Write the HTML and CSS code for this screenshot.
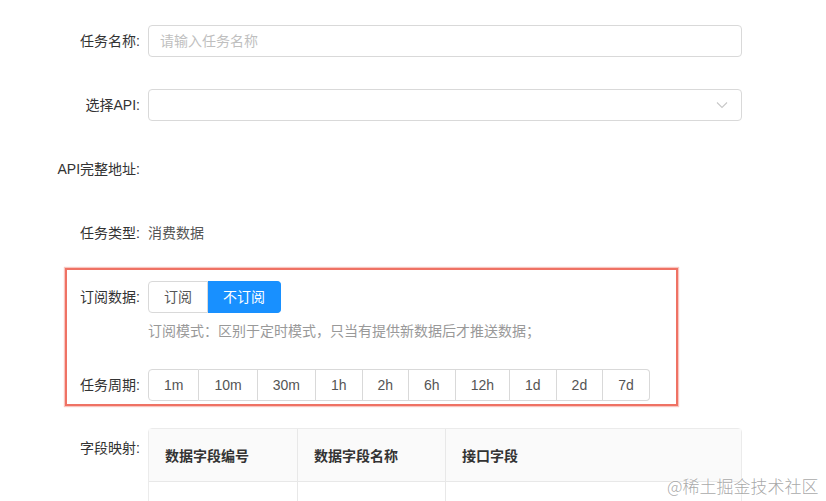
FILE: index.html
```html
<!DOCTYPE html>
<html lang="zh-CN">
<head>
<meta charset="utf-8">
<title>任务配置</title>
<link rel="stylesheet" href="styles.css">
</head>
<body>
<form class="form">
  <div class="item">
    <label class="label">任务名称:</label>
    <div class="control">
      <input class="input" type="text" placeholder="请输入任务名称">
    </div>
  </div>
  <div class="item">
    <label class="label">选择API:</label>
    <div class="control">
      <div class="select">
        <svg class="arrow" width="12" height="8" viewBox="0 0 12 8"><path d="M1 1.5 L6 6.5 L11 1.5" fill="none" stroke="#c8c8c8" stroke-width="1.1"/></svg>
      </div>
    </div>
  </div>
  <div class="item">
    <label class="label">API完整地址:</label>
    <div class="control text"></div>
  </div>
  <div class="item">
    <label class="label">任务类型:</label>
    <div class="control text">消费数据</div>
  </div>

  <div class="box">
    <div class="item item-tight">
      <label class="label">订阅数据:</label>
      <div class="control">
        <div class="group">
          <span class="rb">订阅</span><span class="rb rb-on">不订阅</span>
        </div>
        <div class="hint">订阅模式：区别于定时模式，只当有提供新数据后才推送数据；</div>
      </div>
    </div>
    <div class="item item-last">
      <label class="label">任务周期:</label>
      <div class="control">
        <div class="group">
          <span class="rb">1m</span><span class="rb">10m</span><span class="rb">30m</span><span class="rb">1h</span><span class="rb">2h</span><span class="rb">6h</span><span class="rb">12h</span><span class="rb">1d</span><span class="rb">2d</span><span class="rb">7d</span>
        </div>
      </div>
    </div>
  </div>

  <div class="item item-table">
    <label class="label label-tall">字段映射:</label>
    <div class="control">
      <table class="table">
        <thead>
          <tr><th class="c1">数据字段编号</th><th class="c2">数据字段名称</th><th>接口字段</th></tr>
        </thead>
        <tbody>
          <tr><td></td><td></td><td></td></tr>
        </tbody>
      </table>
    </div>
  </div>
</form>
<div class="watermark">@稀土掘金技术社区</div>
</body>
</html>
```
FILE: styles.css
```css
html, body {
  margin: 0;
  padding: 0;
  background: #fff;
  overflow: hidden;
  height: 501px;
}
body {
  font-family: "Liberation Sans", "Noto Sans CJK SC", sans-serif;
  font-size: 14px;
  color: #333;
  position: relative;
}
.form {
  width: 742px;
  padding-top: 25px;
}
.item {
  display: flex;
  margin-bottom: 32px;
}
.label {
  flex: none;
  width: 148px;
  box-sizing: border-box;
  padding-right: 8px;
  text-align: right;
  line-height: 32px;
  color: #333;
}
.label-tall {
  line-height: 40px;
}
.control {
  flex: 1;
  min-width: 0;
}
.text {
  line-height: 32px;
  color: #555;
}
.input {
  display: block;
  width: 100%;
  height: 32px;
  box-sizing: border-box;
  border: 1px solid #d9d9d9;
  border-radius: 4px;
  padding: 0 11px;
  font: inherit;
  color: #333;
  outline: none;
}
.input::placeholder {
  color: #bfbfbf;
}
.select {
  height: 32px;
  box-sizing: border-box;
  border: 1px solid #d9d9d9;
  border-radius: 4px;
  display: flex;
  align-items: center;
  justify-content: flex-end;
  padding-right: 13px;
}
.arrow {
  display: block;
}
.box {
  margin: -13px 64px 0 65px;
  border: 2px solid #ef7264;
  box-shadow: 0 0 1px 1px rgba(244, 160, 150, 0.6);
  padding: 11px 0 3px;
}
.box .label {
  width: 81px;
}
.item-tight {
  margin-bottom: 27px;
}
.item-last {
  margin-bottom: 0;
}
.group {
  display: flex;
}
.rb {
  height: 32px;
  line-height: 30px;
  box-sizing: border-box;
  padding: 0 15px;
  border: 1px solid #d9d9d9;
  border-left-width: 0;
  color: #555;
  background: #fff;
}
.rb:first-child {
  border-left-width: 1px;
  border-radius: 4px 0 0 4px;
}
.rb:last-child {
  border-radius: 0 4px 4px 0;
}
.rb-on {
  background: #1890ff;
  border-color: #1890ff;
  color: #fff;
}
.hint {
  margin-top: 7px;
  line-height: 22px;
  color: #999;
}
.item-table {
  margin-top: 22px;
  margin-bottom: 0;
}
.table {
  width: 100%;
  border-collapse: separate;
  border-spacing: 0;
  border: 1px solid #ebebeb;
  border-radius: 4px 4px 0 0;
}
.table th {
  height: 53px;
  box-sizing: border-box;
  padding: 0 16px;
  text-align: left;
  font-weight: bold;
  color: #333;
  background: #fafafa;
  border-bottom: 1px solid #e8e8e8;
}
.table th + th,
.table td + td {
  border-left: 1px solid #e8e8e8;
}
.table .c1,
.table .c2 {
  width: 148px;
}
.table td {
  height: 54px;
}
.watermark {
  position: absolute;
  left: 667px;
  top: 474px;
  font-size: 17px;
  line-height: 24px;
  color: rgba(140, 140, 140, 0.75);
  text-shadow: 0 0 2px #fff, 0 0 2px #fff;
  white-space: nowrap;
  font-family: "Noto Sans CJK SC", sans-serif;
  font-weight: 300;
}
```
